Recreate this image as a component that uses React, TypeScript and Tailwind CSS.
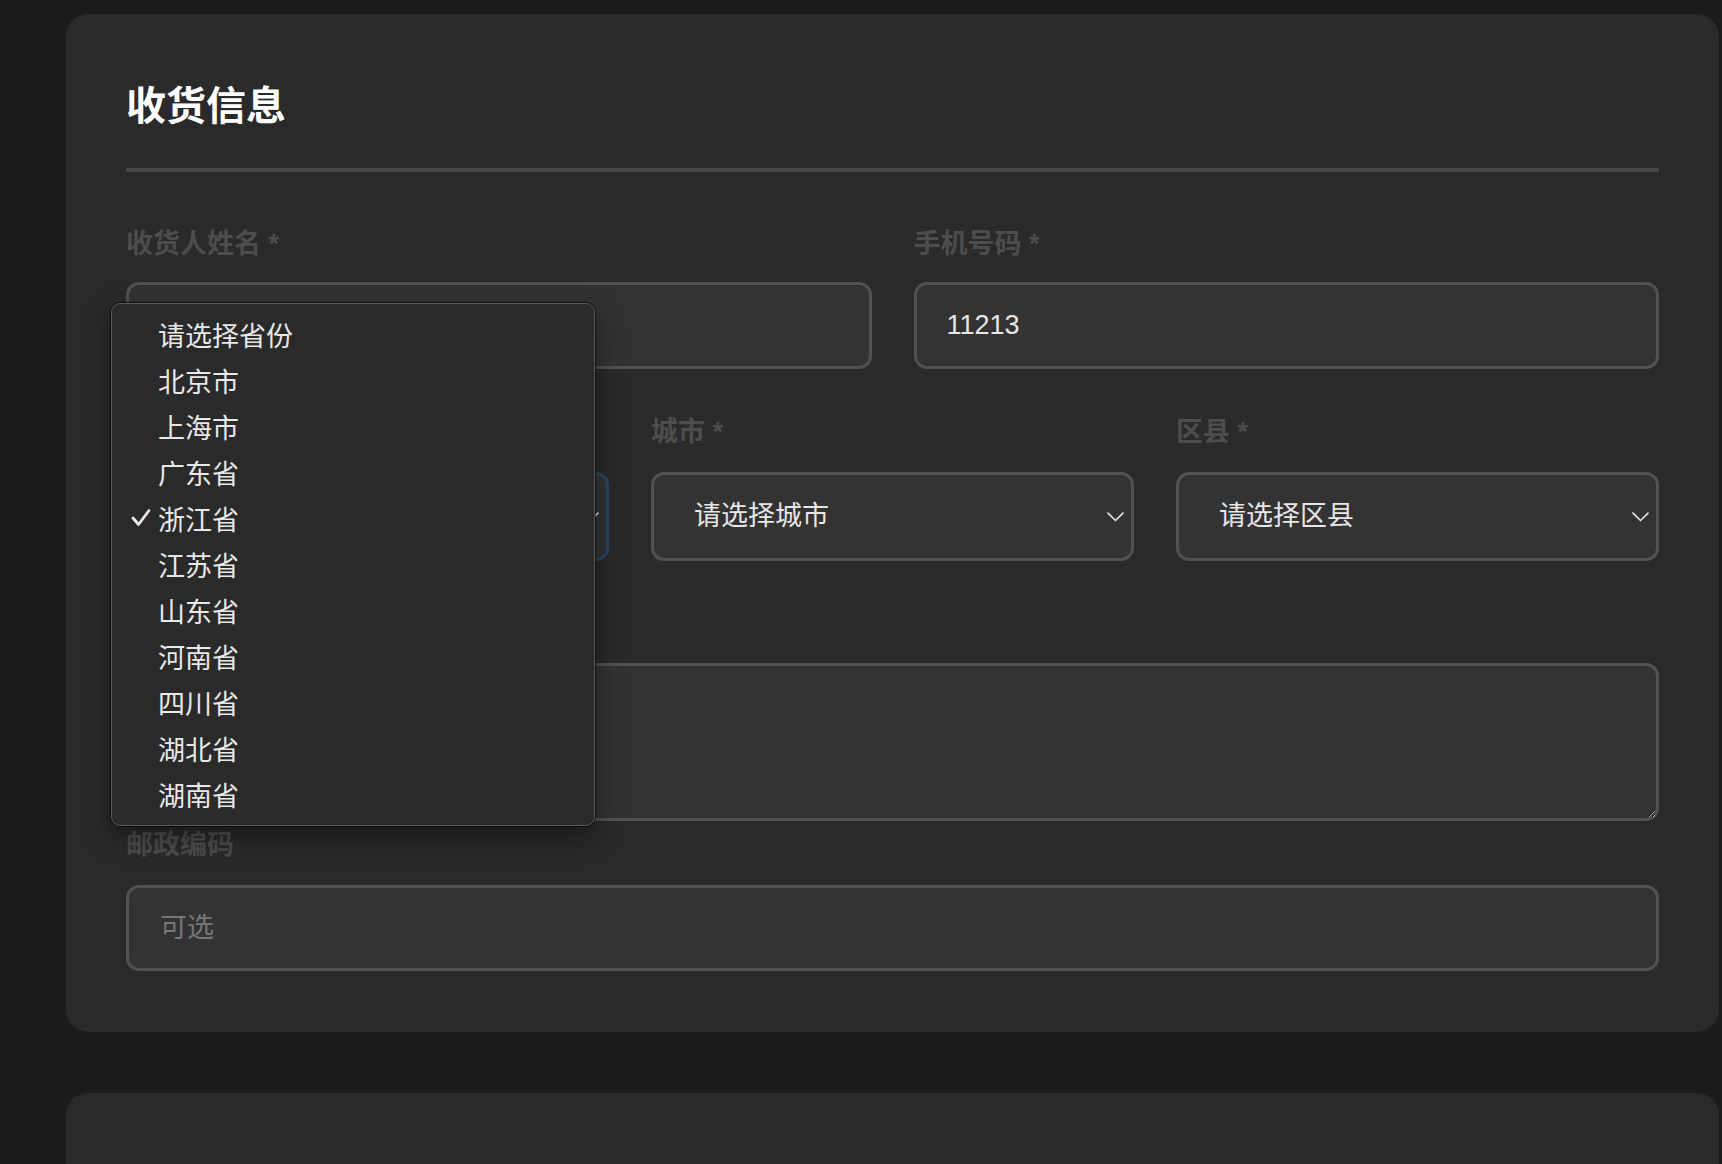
import React from "react";

const font = { fontFamily: '"Liberation Sans", "Noto Sans CJK SC", sans-serif' };

function Chevron() {
  return (
    <svg width="17" height="10" viewBox="0 0 17 10" fill="none" className="shrink-0">
      <path d="M1 1.2 L8.5 8.5 L16 1.2" stroke="#e0e0e0" strokeWidth="1.7" strokeLinecap="round" strokeLinejoin="round" />
    </svg>
  );
}

function Check() {
  return (
    <svg width="20" height="20" viewBox="0 0 20 20" fill="none">
      <path d="M2 10 L7.5 16.5 L18 2.5" stroke="#eaeaea" strokeWidth="2.8" strokeLinecap="round" strokeLinejoin="round" />
    </svg>
  );
}

const provinces = ["请选择省份", "北京市", "上海市", "广东省", "浙江省", "江苏省", "山东省", "河南省", "四川省", "湖北省", "湖南省"];

function Label({ children }: { children: React.ReactNode }) {
  return <div className="text-[27px] leading-[36px] font-semibold text-[#4d4d4d]">{children}</div>;
}

export default function App() {
  return (
    <div className="w-[1722px] h-[1164px] overflow-hidden bg-[#1b1b1b] pl-[66px] pt-[14px]" style={font}>
      <div className="w-[1653px] rounded-[22px] bg-[#2a2a2a] px-[60px] pt-[68px] pb-[61px]">
        <div className="text-[40px] leading-[48px] font-bold text-white">收货信息</div>
        <div className="mt-[38px] h-[4px] bg-[#474747]" />

        <div className="mt-[54px] grid grid-cols-2 gap-x-[42px]">
          <div>
            <Label>收货人姓名 *</Label>
            <div className="mt-[20px] h-[87px] rounded-[13px] border-[3px] border-[#525252] bg-[#333333]" />
          </div>
          <div>
            <Label>手机号码 *</Label>
            <div className="mt-[20px] h-[87px] rounded-[13px] border-[3px] border-[#525252] bg-[#333333] flex items-center pl-[30px] text-[27px] text-[#e6e6e6]">
              11213
            </div>
          </div>
        </div>

        <div className="relative mt-[45px] grid grid-cols-3 gap-x-[42px]">
          <div>
            <Label>省份 *</Label>
            <div className="mt-[22px] h-[89px] rounded-[13px] border-[3px] border-[#2c4766] bg-[#333333] flex items-center justify-between pl-[40px] pr-[7px] text-[27px] text-[#e6e6e6]">
              <span>浙江省</span>
              <Chevron />
            </div>
          </div>
          <div>
            <Label>城市 *</Label>
            <div className="mt-[22px] h-[89px] rounded-[13px] border-[3px] border-[#525252] bg-[#333333] flex items-center justify-between pl-[40px] pr-[7px] text-[27px] text-[#e6e6e6]">
              <span>请选择城市</span>
              <Chevron />
            </div>
          </div>
          <div>
            <Label>区县 *</Label>
            <div className="mt-[22px] h-[89px] rounded-[13px] border-[3px] border-[#525252] bg-[#333333] flex items-center justify-between pl-[40px] pr-[7px] text-[27px] text-[#e6e6e6]">
              <span>请选择区县</span>
              <Chevron />
            </div>
          </div>
        </div>

        <div className="mt-[45px]">
          <Label>详细地址 *</Label>
          <textarea
            className="mt-[21px] block w-full h-[158px] rounded-[13px] border-[3px] border-[#525252] bg-[#333333] resize-y outline-none"
            style={{ colorScheme: "dark" }}
          />
        </div>

        <div className="mt-[6px]">
          <Label>邮政编码</Label>
          <div className="mt-[22px] h-[86px] rounded-[13px] border-[3px] border-[#525252] bg-[#333333] flex items-center pl-[31px] text-[27px] text-[#777777]">
            可选
          </div>
        </div>
      </div>

      <div className="mt-[61px] w-[1653px] h-[300px] rounded-[22px] bg-[#2a2a2a]" />

      <div className="absolute left-[111px] top-[303px] w-[484px] h-[523px] rounded-[9px] border border-[#5a5a5a] bg-[#2a2a2a] shadow-[0_0_0_1px_rgba(0,0,0,0.6),0_10px_30px_rgba(0,0,0,0.45)] pt-[10px]">
        {provinces.map((p, i) => (
          <div key={p} className="relative h-[46px] flex items-center pl-[46px] text-[27px] text-[#e8e8e8]">
            {i === 4 && (
              <span className="absolute left-[19px] top-[10px]">
                <Check />
              </span>
            )}
            {p}
          </div>
        ))}
      </div>
    </div>
  );
}
